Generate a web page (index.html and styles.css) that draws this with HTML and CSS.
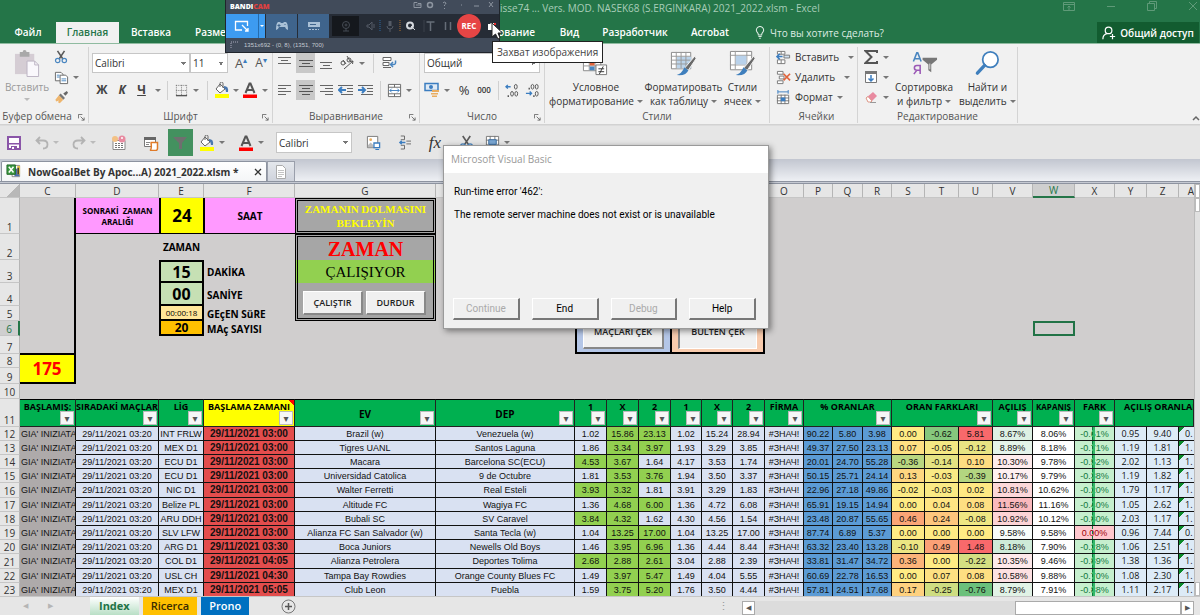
FILE: index.html
```html
<!DOCTYPE html>
<html lang="ru">
<head>
<meta charset="utf-8">
<title>NowGoalBet - Excel</title>
<link rel="stylesheet" href="styles.css">
</head>
<body>
<svg class="defs" aria-hidden="true">
  <symbol id="cut" viewBox="0 0 16 16"><path d="M4 1l6 9M12 1L6 10" stroke="#5a5a5a" stroke-width="1.8" fill="none"/><circle cx="4.2" cy="12" r="2.5" fill="none" stroke="#4a86c0" stroke-width="1.4"/><circle cx="11.8" cy="12" r="2.5" fill="none" stroke="#4a86c0" stroke-width="1.4"/></symbol>
  <symbol id="copy" viewBox="0 0 16 16"><path d="M1.500 2.500h6l2 2v7h-8z" fill="#fff" stroke="#666"/><path d="M6.500 5.500h6l2 2v7h-8z" fill="#fff" stroke="#666"/><path d="M3 5.500h3M3 7.500h3M8 9.500h5M8 11.500h5" stroke="#4a86c0"/></symbol>
  <symbol id="brush" viewBox="0 0 16 16"><path d="M10 4l4-3 1.500 2-3 3.500z" fill="#666"/><path d="M7 4l5 5-2 2-5-5z" fill="#777"/><path d="M5 6l5 5-4 4-2-1 1-2-3 1-1-2z" fill="#eeb56d"/></symbol>
  <symbol id="paste" viewBox="0 0 28 28"><path d="M1 4h20v21H1z" fill="#d5cdd4"/><path d="M6 2h3a2 2 0 0 1 4 0h3v5H6z" fill="#a9a9a9"/><path d="M13.500 11.500h8l4 4v12h-12z" fill="#faf8fc" stroke="#bbb3c3"/><path d="M21.500 11.500v4h4" fill="none" stroke="#bbb3c3"/></symbol>
  <symbol id="bucket" viewBox="0 0 16 16"><path d="M6 2l5 5-5 4-4-4z" fill="#fff" stroke="#666"/><path d="M6 5V1.500a1.500 1.500 0 0 1 3 0V6" fill="none" stroke="#666"/><path d="M10 4q5 0 4 6l-2 0q0-3-2-4z" fill="#4a78b0"/><path d="M1 12h14v4H1z" fill="#ff0"/></symbol>
  <symbol id="fontcolor" viewBox="0 0 16 16"><path d="M3.500 11L7.500 1.500h1L12.500 11M5 8h6" stroke="#555" stroke-width="2" fill="none"/><path d="M1 12.500h14V16H1z" fill="#f00"/></symbol>
  <symbol id="borders" viewBox="0 0 14 14"><path d="M1 1.500h12M1 7h12M1.500 1v12M7 1v12M12.500 1v12" stroke="#777" stroke-dasharray="1 1" fill="none"/><path d="M1 12.500h12" stroke="#555" stroke-width="1.500"/></symbol>
  <symbol id="al-l" viewBox="0 0 14 14"><path d="M0 2.500h13M0 5.500h8M0 8.500h13M0 11.500h8" stroke="#666"/></symbol>
  <symbol id="al-c" viewBox="0 0 14 14"><path d="M0 2.500h14M3 5.500h8M0 8.500h14M3 11.500h8" stroke="#555"/></symbol>
  <symbol id="al-r" viewBox="0 0 14 14"><path d="M1 2.500h13M6 5.500h8M1 8.500h13M6 11.500h8" stroke="#666"/></symbol>
  <symbol id="v-t" viewBox="0 0 14 14"><path d="M0 1.500h13M3 4.500h7M0 7.500h13" stroke="#666"/></symbol>
  <symbol id="v-m" viewBox="0 0 14 14"><path d="M0 4.500h14M3 7.500h8M0 10.500h14" stroke="#555"/></symbol>
  <symbol id="v-b" viewBox="0 0 14 14"><path d="M1 6.500h12M4 9.500h7M1 12.500h12" stroke="#666"/></symbol>
  <symbol id="orient" viewBox="0 0 16 16"><g fill="none" stroke="#555"><circle cx="4" cy="8" r="2"/><path d="M4 5l3 4M8 1l3 5"/><circle cx="10" cy="5" r="2"/><path d="M5 14L14 6M14 6l-3 .500M14 6l-.500 3"/></g></symbol>
  <symbol id="wrap" viewBox="0 0 16 16"><path d="M2 2.500h8v3H2zM2 7.500h6v3H2zM2 12.500h8" fill="#fff" stroke="#666"/><path d="M10 9.500h3q2 0 1.500-4M12 7l-2.500 2.500L12 12" fill="none" stroke="#4a86c0" stroke-width="1.500"/></symbol>
  <symbol id="ind-l" viewBox="0 0 16 14"><path d="M0 2.500h15M9 5.500h6M9 8.500h6M3 11.500h12" stroke="#666"/><path d="M8 7H1M4 4L1 7l3 3" stroke="#3b7dc0" stroke-width="2" fill="none"/></symbol>
  <symbol id="ind-r" viewBox="0 0 16 14"><path d="M0 2.500h15M9 5.500h6M9 8.500h6M3 11.500h12" stroke="#666"/><path d="M0 7h7M4 4l3 3-3 3" stroke="#3b7dc0" stroke-width="2" fill="none"/></symbol>
  <symbol id="merge" viewBox="0 0 16 16"><path d="M1.500 1.500h13v13h-13zM1.500 4.500h13M1.500 11.500h13M8 1.500v3M8 11.500v3" fill="#fff" stroke="#666"/><path d="M3 8h10M5 6L3 8l2 2M11 6l2 2-2 2" stroke="#3b7dc0" fill="none"/></symbol>
  <symbol id="money" viewBox="0 0 16 16"><path d="M1 1.500h13v7H1z" fill="#dfeaf5" stroke="#3b7dc0" stroke-width="1.500"/><circle cx="7" cy="5" r="2" fill="#3b7dc0"/><path d="M8 8h7v2H8zM7 11h7v1.500H7zM8 13.500h5V15H8z" fill="#e9ad60"/></symbol>
  <symbol id="dec1" viewBox="0 0 16 16"><path d="M6 4H1M3 2L1 4l2 2" stroke="#3b7dc0" fill="none" stroke-width="1.400"/><ellipse cx="11.500" cy="4" rx="1.500" ry="2.500" fill="none" stroke="#555"/><ellipse cx="7.500" cy="11.500" rx="1.500" ry="2.500" fill="none" stroke="#555"/><ellipse cx="12" cy="11.500" rx="1.500" ry="2.500" fill="none" stroke="#555"/><path d="M3.500 13v2" stroke="#555" stroke-width="1.500"/></symbol>
  <symbol id="dec2" viewBox="0 0 16 16"><path d="M1 11h6M5 9l2 2-2 2" stroke="#3b7dc0" fill="none" stroke-width="1.400"/><ellipse cx="8" cy="4" rx="1.500" ry="2.500" fill="none" stroke="#555"/><ellipse cx="12.500" cy="4" rx="1.500" ry="2.500" fill="none" stroke="#555"/><ellipse cx="12.500" cy="11.500" rx="1.500" ry="2.500" fill="none" stroke="#555"/><path d="M4.500 5v2M9.500 13v2" stroke="#555" stroke-width="1.500"/></symbol>
  <symbol id="cond" viewBox="0 0 28 28"><path d="M1.500 1.500h18v20h-18z" fill="#fff" stroke="#888"/><path d="M7.500 1v20M13.500 1v20M1 6.500h18M1 11.500h18M1 16.500h18" stroke="#999"/><path d="M8 2h8v4H8zM8 12h5v4H8z" fill="#e0643c"/><path d="M8 7h5v4H8zM8 17h5v4H8z" fill="#4a86c0"/><path d="M14.500 15.500h11v10h-11z" fill="#fff" stroke="#777"/><path d="M17 19.500h6M17 22.500h6M22 17l-4 8" stroke="#333"/></symbol>
  <symbol id="fmt" viewBox="0 0 28 28"><path d="M1.500 2.500h20v17h-20z" fill="#fff" stroke="#888"/><path d="M7 7h15v12H7z" fill="#bcd4ea"/><path d="M6.500 2v17M11.500 2v17M16.500 2v17M1 6.500h20M1 10.500h20M1 14.500h20" stroke="#999"/><path d="M26 6l1 3-8 12-4-2z" fill="#6a6a6a" stroke="#f1f1f1"/><path d="M15 18l4 3q-2 6-12 5 5-1 8-8z" fill="#3f7fbd"/></symbol>
  <symbol id="styles" viewBox="0 0 28 28"><path d="M1.500 1.500h22v19h-22z" fill="#fff" stroke="#888"/><path d="M6.500 1v19M18.500 1v19M1 5.500h22M1 15.500h22" stroke="#999"/><path d="M7 6h11v9H7z" fill="#b9d2eb"/><path d="M26 6l1 3-8 12-4-2z" fill="#6a6a6a" stroke="#f1f1f1"/><path d="M15 18l4 3q-2 6-12 5 5-1 8-8z" fill="#3f7fbd"/></symbol>
  <symbol id="c-ins" viewBox="0 0 16 16"><path d="M1.500 1.500h8v3h-8zM1.500 10.500h8v4h-8zM5.500 1.500v3M5.500 10.500v4" fill="#fff" stroke="#777"/><path d="M8.500 5.500h6v3h-6z" fill="#cfe0f0" stroke="#777"/><path d="M7 7H1M4 4L1 7l3 3" stroke="#3b7dc0" stroke-width="1.600" fill="none"/></symbol>
  <symbol id="c-del" viewBox="0 0 16 16"><path d="M1.500 1.500h6v3h-6zM3.500 6.500h5v3h-5zM1.500 11.500h6v3h-6z" fill="#fff" stroke="#777"/><path d="M8 4l7 7M15 4l-7 7" stroke="#e0643c" stroke-width="1.800"/></symbol>
  <symbol id="c-fmt" viewBox="0 0 16 16"><path d="M2 2h11M2 0v4M13 0v4" stroke="#3b7dc0"/><path d="M1.500 5.500h12v9h-12zM1 8.500h13M1 11.500h13M5.500 5v10M9.500 5v10" fill="#fff" stroke="#777"/><path d="M5 8h5v4H5z" fill="#3b7dc0"/></symbol>
  <symbol id="sigma" viewBox="0 0 14 14"><path d="M13 3V1H1.500l6 6-6 6H13v-2" fill="none" stroke="#555" stroke-width="2"/></symbol>
  <symbol id="filld" viewBox="0 0 14 14"><path d="M1.500 1.500h11v11h-11z" fill="#fff" stroke="#777"/><path d="M1 1h12v3H1z" fill="#777"/><path d="M7 5v6M4.500 8.500L7 11l2.500-2.500" fill="none" stroke="#3b7dc0" stroke-width="1.500"/></symbol>
  <symbol id="erase" viewBox="0 0 14 14"><path d="M2 8l7-6 4 4-6 6H4z" fill="#e88aa0"/><path d="M2 8l2-1.500L8 11l-1 1H4z" fill="#fff" stroke="#d98"/><path d="M6 12.500h6" stroke="#999"/></symbol>
  <symbol id="sort" viewBox="0 0 28 28"><path d="M2.500 12L6 3h1l3.500 9M4 9h5" fill="none" stroke="#4a86c0" stroke-width="1.600"/><path d="M9.500 25V16H6q-2.500 0-2.500 2.500T6 21h3.500M6 21l-3 4" fill="none" stroke="#9b59b6" stroke-width="1.600"/><path d="M12 8h15v2l-6 5v8l-3-2v-6l-6-5z" fill="#777"/><path d="M19.500 14v6" stroke="#ddd"/></symbol>
  <symbol id="find" viewBox="0 0 28 28"><circle cx="17" cy="10" r="8" fill="#fff" stroke="#3f7fbd" stroke-width="1.800"/><path d="M11 16L3.500 24" stroke="#3f7fbd" stroke-width="3.500" stroke-linecap="round"/></symbol>
  <symbol id="launch" viewBox="0 0 8 8"><path d="M.500 5V.500H5M3 3l4 4M7 4v3H4" fill="none" stroke="#666"/></symbol>
  <symbol id="save" viewBox="0 0 14 14"><path d="M1 1h12v12H1z" fill="#fff" stroke="#8a55a8" stroke-width="2"/><path d="M2 7h10v1.500H2zM4 10h6v3H4z" fill="#8a55a8"/><path d="M5 11h2v2H5z" fill="#fff"/></symbol>
  <symbol id="undo" viewBox="0 0 14 14"><path d="M5 1L1.500 4.500 5 8M2 4.500h6q4.500 0 4.500 4T8 12.500" fill="none" stroke="#b3b3b3" stroke-width="1.800"/></symbol>
  <symbol id="redo" viewBox="0 0 14 14"><path d="M9 1l3.500 3.500L9 8M12 4.500H6q-4.500 0-4.500 4T6 12.500" fill="none" stroke="#b3b3b3" stroke-width="1.800"/></symbol>
  <symbol id="cal" viewBox="0 0 16 16"><path d="M2 5.500h12v9H2z" fill="#fff" stroke="#888"/><path d="M4 8.500h8M4 10.500h8M4 12.500h8" stroke="#777" stroke-dasharray="2 1"/><circle cx="4" cy="4" r="3" fill="#f3c184"/><circle cx="11" cy="4" r="3.500" fill="#e88aa0"/><circle cx="11" cy="3" r="1" fill="#fff"/></symbol>
  <symbol id="note" viewBox="0 0 16 16"><path d="M1.500 2.500h11v9h-11z" fill="#fff" stroke="#777"/><path d="M1 2h12v3H1z" fill="#666"/><path d="M3 7.500h4M3 9.500h3" stroke="#888"/><path d="M7.500 7.500h7v6q0 2-2 2H7q2-1 1-8z" fill="#fff" stroke="#e07b28" stroke-width="1.500"/></symbol>
  <symbol id="funnel" viewBox="0 0 14 14"><path d="M0 1h14L9 7v6H6V7z" fill="#6f6f6f"/></symbol>
  <symbol id="img" viewBox="0 0 16 16"><path d="M1.500 1.500h11v12h-11z" fill="#fff" stroke="#777"/><circle cx="5" cy="5" r="1.500" fill="#e9ad60"/><path d="M2 11l3-3 3 3v2H2z" fill="#bbb"/><path d="M8.500 8.500h6v5h-6zM10 15.500h4" fill="#fff" stroke="#3b7dc0" stroke-width="1.400"/></symbol>
  <symbol id="split" viewBox="0 0 14 16"><path d="M3 1h4v4H3M3 11h4v4H3M9 6.500h5M9 9.500h5" fill="none" stroke="#666"/><path d="M8 8H2M4 6L2 8l2 2" fill="none" stroke="#3b7dc0" stroke-width="1.500"/></symbol>
  <symbol id="tabsel" viewBox="0 0 16 16"><path d="M1.500 1.500h13v13h-13zM1 5.500h14M1 10.500h14M5.500 1v14M10.500 1v14" fill="#fff" stroke="#777"/><path d="M4 5h8v5H4z" fill="#7aa7d3" stroke="#3b6da0"/></symbol>
  <symbol id="bulb" viewBox="0 0 12 16"><path d="M4 11q0-2-1.500-3.500a4.300 4.300 0 1 1 7 0Q8 9 8 11zM4 13h4M5 15h2" fill="none" stroke="#dcebe2" stroke-width="1.300"/></symbol>
  <symbol id="share" viewBox="0 0 16 16"><circle cx="7.500" cy="5" r="3.800" fill="none" stroke="#fff" stroke-width="1.400"/><path d="M1 15q0-5 5-6.500M9 12h6M12 9v6" fill="none" stroke="#fff" stroke-width="1.400"/></symbol>
  <symbol id="xl" viewBox="0 0 16 16"><path d="M6.500 1.500h8v12h-8z" fill="#fff" stroke="#888"/><path d="M9 5h5v8H9z" fill="#4a6fae"/><path d="M12 2h3v9h-3z" fill="#e3c14c"/><path d="M13 4v7" stroke="#333" stroke-width="1.500"/><path d="M1 1h9v10H1z" fill="#3c9a41" stroke="#22682a"/><path d="M3 3l5 6M8 3L3 9" stroke="#fff" stroke-width="1.600"/></symbol>
  <symbol id="page" viewBox="0 0 12 14"><path d="M1.500.500h6l3 3v10h-9z" fill="#fff" stroke="#aaa"/><path d="M3 5.500h6M3 7.500h6M3 9.500h6M3 11.500h4" stroke="#c3c3c3"/></symbol>
</svg>

<div class="app">
  <header class="top">
    <div class="titlebar">
      <span class="title">isse74 ... Vers. MOD. NASEK68 (S.ERGINKARA) 2021_2022.xlsm - Excel</span>
      <div class="winbtns">
        <button aria-label="Параметры ленты"><svg width="12" height="10"><path d="M.500 1.500h11v8H.500zM.500 3.500h11M6 9V5M4.500 6.500L6 5l1.500 1.500" fill="none" stroke="#5f9a78"/></svg></button>
        <button aria-label="Свернуть"><svg width="10" height="10"><path d="M1 5.500h8" stroke="#5f9a78"/></svg></button>
        <button aria-label="Восстановить"><svg width="10" height="10"><path d="M.500 2.500h7v7h-7zM2.500 2.500v-2h7v7h-2" fill="none" stroke="#5f9a78"/></svg></button>
        <button aria-label="Закрыть"><svg width="10" height="10"><path d="M1 1l8 8M9 1L1 9" stroke="#5f9a78"/></svg></button>
      </div>
    </div>
    <nav class="tabs">
      <a href="#">Файл</a><a href="#" class="on">Главная</a><a href="#">Вставка</a><a href="#" class="left">Разметка</a><a href="#" class="right">Рецензирование</a><a href="#">Вид</a><a href="#">Разработчик</a><a href="#">Acrobat</a>
      <button class="tell"><svg width="10" height="13"><use href="#bulb"/></svg>Что вы хотите сделать?</button>
      <button class="share"><svg width="14" height="14"><use href="#share"/></svg>Общий доступ</button>
    </nav>
  </header>

  <section class="ribbon">
    <div class="group g-clip">
      <div class="body">
        <button class="big off"><svg width="27" height="27"><use href="#paste"/></svg>Вставить<i class="caret"></i></button>
        <div class="stack">
          <button class="ib" aria-label="Вырезать"><svg width="14" height="14"><use href="#cut"/></svg></button>
          <button class="ib" aria-label="Копировать"><svg width="15" height="15"><use href="#copy"/></svg><i class="caret"></i></button>
          <button class="ib" aria-label="Формат по образцу"><svg width="15" height="14"><use href="#brush"/></svg></button>
        </div>
      </div>
      <div class="label">Буфер обмена<svg width="7" height="7"><use href="#launch"/></svg></div>
    </div>
    <div class="group g-font">
      <div class="body rows">
        <div class="r f1">
          <select aria-label="Шрифт"><option>Calibri</option></select><select aria-label="Размер"><option>11</option></select>
          <button class="ib grow">A<sup>▴</sup></button><button class="ib grow less">A<sup>▾</sup></button>
        </div>
        <div class="r f2">
          <button class="ib b">Ж</button><button class="ib b i">К</button><button class="ib b u">Ч</button><i class="caret"></i><i class="sep"></i>
          <button class="ib" aria-label="Границы"><svg width="13" height="13"><use href="#borders"/></svg></button><i class="caret"></i><i class="sep"></i>
          <button class="ib" aria-label="Заливка"><svg width="16" height="16"><use href="#bucket"/></svg></button><i class="caret"></i>
          <button class="ib" aria-label="Цвет текста"><svg width="16" height="16"><use href="#fontcolor"/></svg></button><i class="caret"></i>
        </div>
      </div>
      <div class="label">Шрифт<svg width="7" height="7"><use href="#launch"/></svg></div>
    </div>
    <div class="group g-align">
      <div class="body rows">
        <div class="r a1">
          <button class="ib" aria-label="По верхнему краю"><svg width="14" height="14"><use href="#v-t"/></svg></button><button class="ib hl" aria-label="По середине"><svg width="14" height="14"><use href="#v-m"/></svg></button><button class="ib" aria-label="По нижнему краю"><svg width="14" height="14"><use href="#v-b"/></svg></button>
          <button class="ib" aria-label="Ориентация"><svg width="16" height="16"><use href="#orient"/></svg><i class="caret"></i></button><i class="sep"></i>
          <button class="ib" aria-label="Перенести текст"><svg width="16" height="16"><use href="#wrap"/></svg></button>
        </div>
        <div class="r a2">
          <button class="ib" aria-label="По левому краю"><svg width="14" height="14"><use href="#al-l"/></svg></button><button class="ib hl" aria-label="По центру"><svg width="14" height="14"><use href="#al-c"/></svg></button><button class="ib" aria-label="По правому краю"><svg width="14" height="14"><use href="#al-r"/></svg></button>
          <button class="ib" aria-label="Уменьшить отступ"><svg width="16" height="14"><use href="#ind-l"/></svg></button><button class="ib" aria-label="Увеличить отступ"><svg width="16" height="14"><use href="#ind-r"/></svg></button><i class="sep"></i>
          <button class="ib" aria-label="Объединить"><svg width="15" height="15"><use href="#merge"/></svg><i class="caret"></i></button>
        </div>
      </div>
      <div class="label">Выравнивание<svg width="7" height="7"><use href="#launch"/></svg></div>
    </div>
    <div class="group g-num">
      <div class="body rows">
        <div class="r n1"><select aria-label="Числовой формат"><option>Общий</option></select></div>
        <div class="r n2">
          <button class="ib" aria-label="Денежный формат"><svg width="16" height="16"><use href="#money"/></svg><i class="caret"></i></button>
          <button class="ib pct">%</button><button class="ib zeros">000</button><i class="sep"></i>
          <button class="ib" aria-label="Увеличить разрядность"><svg width="15" height="15"><use href="#dec1"/></svg></button><button class="ib" aria-label="Уменьшить разрядность"><svg width="15" height="15"><use href="#dec2"/></svg></button>
        </div>
      </div>
      <div class="label">Число<svg width="7" height="7"><use href="#launch"/></svg></div>
    </div>
    <div class="group g-styles">
      <div class="body">
        <button class="big"><svg width="27" height="27"><use href="#cond"/></svg>Условное<span>форматирование<i class="caret"></i></span></button>
        <button class="big"><svg width="27" height="27"><use href="#fmt"/></svg>Форматировать<span>как таблицу<i class="caret"></i></span></button>
        <button class="big"><svg width="27" height="27"><use href="#styles"/></svg>Стили<span>ячеек<i class="caret"></i></span></button>
      </div>
      <div class="label">Стили</div>
    </div>
    <div class="group g-cells">
      <div class="body stack">
        <button class="ib"><svg width="15" height="15"><use href="#c-ins"/></svg>Вставить<i class="caret far"></i></button>
        <button class="ib"><svg width="15" height="15"><use href="#c-del"/></svg>Удалить<i class="caret far"></i></button>
        <button class="ib"><svg width="15" height="15"><use href="#c-fmt"/></svg>Формат<i class="caret"></i></button>
      </div>
      <div class="label">Ячейки</div>
    </div>
    <div class="group g-edit">
      <div class="body">
        <div class="stack">
          <button class="ib" aria-label="Сумма"><svg width="14" height="14"><use href="#sigma"/></svg><i class="caret"></i></button>
          <button class="ib" aria-label="Заполнить"><svg width="14" height="14"><use href="#filld"/></svg><i class="caret"></i></button>
          <button class="ib" aria-label="Очистить"><svg width="14" height="14"><use href="#erase"/></svg><i class="caret"></i></button>
        </div>
        <button class="big"><svg width="27" height="27"><use href="#sort"/></svg>Сортировка<span>и фильтр<i class="caret"></i></span></button>
        <button class="big"><svg width="27" height="27"><use href="#find"/></svg>Найти и<span>выделить<i class="caret"></i></span></button>
      </div>
      <div class="label">Редактирование</div>
    </div>
    <button class="collapse" aria-label="Свернуть ленту"><svg width="8" height="6"><path d="M1 5l3-3 3 3" fill="none" stroke="#666" stroke-width="1.500"/></svg></button>
  </section>

  <section class="qat">
    <button class="ib" aria-label="Сохранить"><svg width="14" height="14"><use href="#save"/></svg></button>
    <button class="ib dim" aria-label="Отменить"><svg width="14" height="14"><use href="#undo"/></svg><i class="caret"></i></button>
    <button class="ib dim" aria-label="Вернуть"><svg width="14" height="14"><use href="#redo"/></svg><i class="caret"></i></button>
    <button class="ib" aria-label="Календарь"><svg width="16" height="16"><use href="#cal"/></svg></button>
    <button class="ib" aria-label="Макросы"><svg width="16" height="16"><use href="#note"/></svg></button>
    <button class="ib filt" aria-label="Фильтр"><svg width="14" height="14"><use href="#funnel"/></svg></button>
    <button class="ib" aria-label="Заливка"><svg width="16" height="16"><use href="#bucket"/></svg><i class="caret"></i></button>
    <button class="ib" aria-label="Цвет"><svg width="16" height="16"><use href="#fontcolor"/></svg><i class="caret"></i></button>
    <select aria-label="Шрифт панели"><option>Calibri</option></select>
    <button class="ib" aria-label="Рисунок"><svg width="15" height="15"><use href="#img"/></svg></button>
    <button class="ib" aria-label="Разделить"><svg width="13" height="15"><use href="#split"/></svg></button>
    <button class="ib fx">fx</button>
    <button class="ib" aria-label="Вырезать"><svg width="15" height="15"><use href="#cut"/></svg></button>
    <button class="ib" aria-label="Таблица"><svg width="15" height="15"><use href="#tabsel"/></svg><i class="caret"></i></button>
  </section>

  <section class="docs">
    <div class="doc"><svg width="15" height="15"><use href="#xl"/></svg><span>NowGoalBet By Apoc...A) 2021_2022.xlsm *</span><button aria-label="Закрыть книгу"><svg width="8" height="8"><path d="M1 1l6 6M7 1L1 7" stroke="#333" stroke-width="1.300"/></svg></button></div>
    <button class="newdoc" aria-label="Новая книга"><svg width="12" height="14"><use href="#page"/></svg></button>
  </section>

  <main class="sheet">
    <div class="view">
    <table>
      <colgroup><col class="w20"><col class="w56"><col class="w83"><col class="w45"><col class="w91"><col class="w141"><col class="w139"><col class="w32"><col class="w32"><col class="w32"><col class="w31"><col class="w31"><col class="w32"><col class="w39"><col class="w29"><col class="w30"><col class="w29"><col class="w33"><col class="w34"><col class="w34"><col class="w40"><col class="w42"><col class="w40"><col class="w32"><col class="w32"><col class="w15"></colgroup>
      <thead><tr class="cols"><th class="corner"></th><th>C</th><th>D</th><th>E</th><th>F</th><th>G</th><th></th><th></th><th></th><th></th><th></th><th></th><th></th><th>O</th><th>P</th><th>Q</th><th>R</th><th>S</th><th>T</th><th>U</th><th>V</th><th class="cur">W</th><th>X</th><th>Y</th><th>Z</th><th class="cut">A</th></tr></thead>
      <tbody class="form">
        <tr class="h36"><th>1</th><td rowspan="7" class="colc"></td><td class="pink small">SONRAKİ&nbsp; ZAMAN ARALIĞI</td><td class="yellow n24">24</td><td class="pink saat">SAAT</td><td class="frame wait">ZAMANIN DOLMASINI BEKLEYİN</td><td rowspan="7"></td><td colspan="3" rowspan="7" class="act blue"><button>MAÇLARI ÇEK</button></td><td colspan="3" rowspan="7" class="act peach"><button>BÜLTEN ÇEK</button></td><td colspan="13"></td></tr>
        <tr class="h26"><th>2</th><td></td><td class="cap">ZAMAN</td><td></td><td class="frame ft zaman">ZAMAN</td><td colspan="13"></td></tr>
        <tr class="h23"><th>3</th><td></td><td class="box mint first">15</td><td class="name">DAKİKA</td><td class="frame fm run">ÇALIŞIYOR</td><td colspan="13"></td></tr>
        <tr class="h23"><th>4</th><td></td><td class="box mint">00</td><td class="name">SANİYE</td><td rowspan="2" class="frame fb"><div class="pair"><button>ÇALIŞTIR</button><button>DURDUR</button></div></td><td colspan="13"></td></tr>
        <tr class="h15"><th>5</th><td></td><td class="box sand">00:00:18</td><td class="name">GEçEN SüRE</td><td colspan="13"></td></tr>
        <tr class="h15"><th class="cur">6</th><td></td><td class="box amber">20</td><td class="name">MAç SAYISI</td><td></td><td colspan="8"></td><td class="sel"></td><td colspan="4"></td></tr>
        <tr class="h18"><th>7</th><td colspan="4"></td><td colspan="13"></td></tr>
        <tr class="h14"><th>8</th><td rowspan="2" class="yellow n175">175</td><td colspan="24"></td></tr>
        <tr class="h16"><th>9</th><td colspan="24"></td></tr>
        <tr class="h15"><th>10</th><td colspan="25"></td></tr>
        <tr class="heads"><th>11</th>
          <td>BAŞLAMIŞ:<button>▾</button></td><td>SIRADAKİ MAÇLAR<button>▾</button></td><td>LİG<button>▾</button></td><td class="yel">BAŞLAMA ZAMANI<button>▾</button></td><td class="mid">EV<button>▾</button></td><td class="mid">DEP<button>▾</button></td><td>1<button>▾</button></td><td>X<button>▾</button></td><td>2<button>▾</button></td><td>1<button>▾</button></td><td>X<button>▾</button></td><td>2<button>▾</button></td><td>FİRMA<button>▾</button></td><td colspan="3">% ORANLAR<button>▾</button></td><td colspan="3">ORAN FARKLARI<button>▾</button></td><td>AÇILIŞ<button>▾</button></td><td class="tight">KAPANIŞ<button>▾</button></td><td>FARK<button>▾</button></td><td colspan="3" class="open">AÇILIŞ ORANLARI</td></tr>
      </tbody>
      <tbody id="data" class="data"></tbody>
    </table>
    </div>
    <div class="vscroll"><i></i><i></i><i class="end"></i></div>
  </main>

  <footer class="bottom">
    <button class="nav" aria-label="Назад">◀</button><button class="nav" aria-label="Вперёд">▶</button>
    <button class="st index">Index</button><button class="st ric">Ricerca</button><button class="st pro">Prono</button>
    <button class="plus" aria-label="Новый лист"><svg width="15" height="15"><circle cx="7.500" cy="7.500" r="6.500" fill="none" stroke="#777"/><path d="M4 7.500h7M7.500 4v7" stroke="#555" stroke-width="1.500"/></svg></button>
    <div class="hs"><span class="dots">⋮</span><button aria-label="Влево">◀</button><div class="track"><i></i></div><button aria-label="Вправо">▶</button></div>
  </footer>

  <div class="bandicam">
    <div class="bt"><b>BANDI<em>CAM</em></b><span class="bw"><svg width="84" height="10" fill="none" stroke="#8d95a0"><path d="M1 2.500h3l1 1h3v4H1zM3 5h5"/><circle cx="17" cy="5" r="2.500" stroke-width="1.500"/><path d="M30 3q1-2 3 0 0 1-1.500 2v1M31.500 8v1M48 5h1M61 6h5M76 2l4 5M80 2l-4 5"/></svg></span></div>
    <div class="bm">
      <button class="m1" aria-label="Область экрана"><svg width="16" height="12" fill="none" stroke="#fff"><path d="M8 10H1.500V1.500h12V6M8 5l6 6M14 8v3h-3" stroke-width="1.300"/></svg></button><button class="m2" aria-label="Режим"><i class="caret"></i></button>
      <button class="m3" aria-label="Игра"><svg width="14" height="10"><path d="M3 1h2l1 1h2l1-1h2q2 1 2 8-2 0-3-3H4Q3 9 1 9 1 2 3 1z" fill="#a9c0d6"/><path d="M4 3v3M2.500 4.500h3M10 3v1" stroke="#3f648c"/></svg></button>
      <button class="m3" aria-label="Устройство"><svg width="14" height="10"><path d="M1 1h12v5H1z" fill="#a9c0d6"/><path d="M2 8.500h10M3 3h5" stroke="#a9c0d6" stroke-dasharray="2 1"/><path d="M3 3.500h6" stroke="#3f648c"/></svg></button>
      <span class="cam"><svg width="12" height="12" fill="none" stroke="#454b54"><circle cx="6" cy="5" r="3.500"/><circle cx="6" cy="5" r="1"/><path d="M3 11h6M6 8v3"/></svg></span>
      <svg class="icons" width="90" height="16" fill="none"><path d="M1 7h2l3-3v8L3 9H1zM8 6v4" stroke="#545b66"/><path d="M14 2v12" stroke="#2b67a0" stroke-dasharray="1 1"/><path d="M24 3v5" stroke="#545b66" stroke-width="3"/><path d="M21 8q0 3 3 3t3-3M24 11v3" stroke="#545b66"/><path d="M34 2v12" stroke="#b0712c" stroke-dasharray="1 1"/><circle cx="44" cy="7.500" r="3" stroke="#d5d9de" stroke-width="2"/><path d="M45 8l4 4" stroke="#d5d9de"/><path d="M58 2v12" stroke="#3a404a"/><path d="M60.500 4h8M64.500 4v9" stroke="#666d78" stroke-width="1.500"/><path d="M79.500 4v8M84.500 4v8" stroke="#666d78" stroke-width="1.500"/></svg>
      <button class="rec">REC</button>
      <span class="shot"><svg width="9" height="9"><path d="M1 2h2l1-1h3v7H1z" fill="#fff"/><path d="M7 1h2v2H7z" fill="#e33"/></svg></span>
    </div>
    <div class="bs"><svg width="8" height="8"><path d="M1 7V1h7" fill="none" stroke="#aab" stroke-dasharray="1 1"/></svg>1351x692 - (0, 8), (1351, 700)</div>
  </div>
  <div class="tip">Захват изображения</div>
  <svg class="pointer" width="12" height="18"><path d="M1 1v14l3.500-3 2.500 5 2-1-2-5h4.500z" fill="#fff" stroke="#222"/></svg>

  <div class="dialog" role="dialog" aria-labelledby="dlg">
    <h2 id="dlg">Microsoft Visual Basic</h2>
    <div class="msg"><p>Run-time error '462':</p><p>The remote server machine does not exist or is unavailable</p></div>
    <div class="acts"><button disabled>Continue</button><button>End</button><button disabled>Debug</button><button>Help</button></div>
  </div>
</div>
<script src="app.js"></script>
</body>
</html>
```
FILE: styles.css
```css
* { box-sizing: border-box; }
body { margin: 0; font: 10px/14px "Open Sans", "Noto Sans", sans-serif; color: #333; }
button, select { font: inherit; color: inherit; margin: 0; padding: 0; border: 0; background: none; border-radius: 0; }
.defs { position: absolute; width: 0; height: 0; }
svg { display: block; flex: none; }
.app { position: relative; height: 100vh; display: flex; flex-direction: column; overflow: hidden; background: #e6e6e6; }
.caret { flex: none; width: 0; height: 0; border: 3px solid transparent; border-top-color: #777; border-bottom: 0; }
.sep { width: 1px; height: 19px; background: #d0d0d0; justify-self: center; }
.ib { display: flex; align-items: center; justify-content: center; gap: 4px; }
select { appearance: none; height: 20px; border: 1px solid #c6c6c6; background: #fff; padding: 0 2px; background-image: linear-gradient(45deg, transparent 50%, #777 50%), linear-gradient(-45deg, transparent 50%, #777 50%); background-size: 3px 3px; background-position: calc(100% - 6px) 8px, calc(100% - 3px) 8px; background-repeat: no-repeat; }

.top { background: #247548; flex: none; }
.titlebar { height: 22px; padding: 0 2px 0 500px; display: flex; align-items: flex-start; justify-content: space-between; color: #a8cdb8; white-space: nowrap; line-height: 16px; }
.winbtns { display: flex; gap: 31px; padding-top: 1px; }
.tabs { height: 22px; display: grid; grid-template-columns: 56px 63px 64px 77px 287px 45px 86px 64px 1fr 103px; border-bottom: 1px solid #8fbba0; color: #fff; }
.tabs a { color: #fff; text-decoration: none; text-align: center; line-height: 21px; white-space: nowrap; font-weight: 600; }
.tabs .on { background: #f1f1f1; color: #247548; }
.tabs .left { text-align: left; padding-left: 12px; }
.tabs .right { text-align: right; padding-right: 12px; }
.tell { display: flex; align-items: center; gap: 5px; padding-left: 13px; color: #dcebe2; }
.share { background: #125c30; display: flex; align-items: center; justify-content: center; gap: 4px; margin-right: 1px; white-space: nowrap; font-weight: 600; }

.ribbon { flex: none; display: flex; background: #f1f1f1; height: 81px; border-bottom: 1px solid #d2d2d2; padding: 3px 0 0; position: relative; }
.group { border-right: 1px solid #d4d4d4; display: flex; flex-direction: column; flex: none; margin-bottom: 1px; }
.body { flex: 1; display: flex; }
.rows { flex-direction: column; gap: 7px; padding-top: 6px; }
.r { display: grid; align-items: center; height: 20px; }
.label { position: relative; text-align: center; color: #555; height: 13px; line-height: 13px; }
.label svg { position: absolute; right: 3px; top: 4px; }
.big { display: flex; flex-direction: column; align-items: center; padding-top: 3px; white-space: nowrap; line-height: 14px; }
.big svg { margin-bottom: 3px; }
.big span { display: flex; align-items: center; gap: 3px; }
.big.off { color: #999; }
.big.off .caret, .dim .caret { border-top-color: #bbb; }
.big.off .caret { margin-top: 4px; }
.stack { display: flex; flex-direction: column; justify-content: flex-start; align-items: flex-start; }
.stack .ib { height: 20px; }
.g-clip { width: 89px; } .g-clip .big { width: 54px; }
.g-clip .label { padding-right: 14px; }
.g-font { width: 184px; }
.g-align { width: 147px; }
.g-num { width: 125px; }
.g-styles { width: 225px; }
.g-cells { width: 88px; padding-left: 6px; }
.g-edit { width: 160px; }
.f1 { grid-template-columns: 98px 38px 20px 20px; padding-left: 3px; }
.grow { font-size: 13px; color: #555; gap: 0; padding-left: 6px; }
.grow.less { font-size: 12px; }
.grow sup { font-size: 8px; line-height: 8px; color: #3b7dc0; align-self: flex-start; }
.f2 { grid-template-columns: 26px 14px 25px 8px 10px 18px 12px 10px 20px 8px 20px 9px; justify-content: start; }
.f2 .caret { justify-self: center; }
.b { font-weight: 700; font-size: 12px; color: #444; } .i { font-style: italic; } .u { text-decoration: underline; }
.a1 { grid-template-columns: 23px 19px 21px 32px 10px 22px; justify-content: start; }
.a2 { grid-template-columns: 23px 19px 21px 20px 20px 8px 30px; justify-content: start; }
.hl { background: #c8c8c8; height: 20px; }
.n1 { padding: 0 4px; }
.n2 { grid-template-columns: 34px 20px 20px 8px 20px 20px; }
.pct { font-size: 13px; } .zeros { font-size: 8px; font-weight: 600; }
.g-styles .body { justify-content: space-between; padding: 0 8px 0 4px; }
.g-edit .body { gap: 6px; padding-left: 6px; }
.g-edit .stack .ib { gap: 5px; }
.far { margin-left: 5px; }
.collapse { position: absolute; right: 0; bottom: 3px; }

.qat { flex: none; height: 34px; display: grid; grid-template-columns: 28px 37px 37px 34px 30px 28px 36px 42px 84px 34px 28px 34px 28px 34px; align-items: center; border-top: 1px solid #dcdcdc; }
.qat select { margin: 0 4px; height: 21px; }
.filt { background: #43915f; width: 25px; height: 27px; justify-self: center; }
.fx { font: italic 17px "Liberation Serif", serif; }

.docs { flex: none; height: 25px; display: flex; align-items: flex-end; padding: 2px 1px 0; background: linear-gradient(#c2c6d0, #eef0f4); border-bottom: 3px double #8d93a0; }
.doc { width: 266px; height: 20px; background: linear-gradient(#fff, #f4f5f7); border: 1px solid #8d93a0; border-bottom: 0; display: flex; align-items: center; gap: 7px; padding: 0 4px; font-weight: 700; white-space: nowrap; border-radius: 2px 2px 0 0; }
.doc span { flex: 1; }
.newdoc { width: 28px; height: 20px; display: grid; place-items: center; background: linear-gradient(#e4e7ec, #cfd3dc); border: 1px solid #9a9fab; border-bottom: 0; }

.sheet { flex: 1; min-height: 0; display: flex; }
.view { flex: 1; overflow: hidden; background: #d0cece; }
.vscroll { width: 6px; border-left: 1px solid #bbb; display: flex; flex-direction: column; background: #e0e0e0; }
.vscroll i { height: 14px; background: #fff; border: 1px solid #bbb; }
.vscroll .end { margin-top: auto; }
table { table-layout: fixed; width: 1194px; border-collapse: separate; border-spacing: 0; }
.w20 { width: 20px; } .w56 { width: 56px; } .w83 { width: 83px; } .w45 { width: 45px; } .w91 { width: 91px; } .w141 { width: 141px; } .w139 { width: 139px; } .w31 { width: 31px; } .w32 { width: 32px; } .w39 { width: 39px; } .w29 { width: 29px; } .w30 { width: 30px; } .w33 { width: 33px; } .w34 { width: 34px; } .w40 { width: 40px; } .w42 { width: 42px; } .w15 { width: 15px; }
td, th { padding: 0; overflow: hidden; white-space: nowrap; text-align: center; }
th { background: #e6e6e6; font-weight: 400; font-size: 10px; line-height: 12px; color: #333; border-right: 1px solid #b5b5b5; border-bottom: 1px solid #c6c6c6; vertical-align: bottom; }
.cols { height: 14px; } .cols th { vertical-align: middle; }
.cols .corner { background: linear-gradient(135deg, #e6e6e6 60%, #b8b8b8 60%); }
.cols .cur { background: #cfcfcf; color: #247548; border-bottom: 2px solid #247548; }
tbody .cur { background: #cfcfcf; color: #247548; border-right: 2px solid #247548; }
.cols .cut { text-align: right; border-right: 0; }
.h36 { height: 36px; } .h26 { height: 26px; } .h23 { height: 23px; } .h18 { height: 18px; } .h16 { height: 16px; } .h15 { height: 15px; } .h14 { height: 14px; }
.form td { color: #000; font-weight: 700; }
.colc { border-right: 2px solid #000; border-bottom: 1px solid #000; }
.pink { background: #ff99ff; border-bottom: 1px solid #000; white-space: normal; }
.small { font-size: 8px; line-height: 11px; }
.saat { border-left: 1px solid #000; }
.yellow { background: #ff0; border: 1px solid #000; }
.n24 { font-size: 17px; border-top: 0; border-left-width: 2px; }
.form .n175 { color: red; font-size: 17px; border-width: 1px 2px 2px 0; }
.frame { background: #a6a6a6; border: 3px double #000; }
.form .wait { color: #ff0; font: 700 11px/14px "Liberation Serif", serif; white-space: normal; }
.ft { border-bottom: 0; } .fm { border-top: 0; border-bottom: 0; } .fb { border-top: 0; }
.form .zaman { color: red; font: 700 20px/20px "Liberation Serif", serif; }
.form .run { background: #92d050; font: 400 15px/20px "Liberation Serif", serif; }
.pair { display: flex; gap: 3px; padding: 5px 7px 0 5px; justify-content: center; }
.pair button, .act button { background: #f0f0f0; border: 1px solid #fff; border-right: 2px solid #888; border-bottom: 2px solid #888; height: 24px; font-size: 9px; font-weight: 600; color: #222; }
.pair button { flex: 1; }
.form .cap, .form .name { font: 700 10px/12px "Open Sans", sans-serif; }
.form .name { text-align: left; padding-left: 3px; }
.box { border: 1px solid #000; border-width: 0 2px 2px; line-height: 12px; }
.first { border-top-width: 2px; }
.mint { background: #c6e0b4; font-size: 16px; }
.form .sand { background: #ffe699; font-weight: 400; font-size: 8px; }
.amber { background: #ffc000; font-size: 12px; }
.act { vertical-align: bottom; border: 2px solid #000; border-top: 0; padding: 0 6px 3px; }
.act button { width: 100%; height: 34px; }
.blue { background: #b4c6e7; border-right-width: 1px; } .peach { background: #f8cbad; border-left-width: 1px; }
.peach button { border-color: #888 #fff #fff #888; border-width: 1px 1px 1px 2px; }
.sel { border: 2px solid #217346; }
.heads { height: 28px; }
.heads td { position: relative; background: #00b050; border-top: 1px solid #000; border-right: 1px solid #222; border-bottom: 1px solid #222; font-size: 9px; line-height: 12px; vertical-align: top; padding-top: 1px; }
.heads .mid { vertical-align: middle; font-size: 10px; }
.heads .tight { font-size: 8px; }
.heads .yel { background: linear-gradient(225deg, red 4px, #ff0 4px); }
.heads .open { text-align: left; padding-left: 9px; }
.heads button { position: absolute; right: 1px; bottom: 1px; width: 14px; height: 14px; background: #f6f6f6; border: 1px solid #bbb; color: #555; font: 10px/11px "DejaVu Sans", sans-serif; }
.data tr { height: 14px; }
.data tr:nth-child(5n) { height: 15px; }
.data td { font: 9px/12px "Liberation Sans", sans-serif; color: #111; background: #d9e1f2; border-right: 1px solid #111; border-bottom: 1px solid #111; }
.data .gia { background: #aeaaaa; border-bottom-color: #aeaaaa; text-align: left; padding-left: 1px; }
.data .when { background: #e34d4d; font-weight: 700; font-size: 10px; }
.data .hot { background: #92d050; }
.data .pc { background: #5b9bd5; }
.data .wh { background: #fff; }
.data .diff { position: relative; background: #c6efce; color: #12783c; }
.data .diff::before { content: ""; position: absolute; left: 17px; top: 0; bottom: 0; border-left: 1px dashed #087a3a; width: 2px; background: #35b868; }
.data .zero { background: #ffc7ce; color: #9c0006; }
.data .zero::before { background: none; }
.data .od { background: #ddebf7; font: 9px/12px "Open Sans", sans-serif; }
.data .od.last { text-align: left; padding-left: 6px; background: linear-gradient(135deg, #0a8a2a 4px, #ddebf7 4px); border-right: 0; }

.bottom { flex: none; height: 19px; display: flex; align-items: stretch; background: #e6e6e6; border-top: 1px solid #c6c6c6; font-size: 11px; line-height: 18px; }
.nav { width: 25px; font-size: 7px; color: #b5b5b5; }
.nav:first-child { margin-left: 13px; }
.st { padding: 0 8px; font-weight: 600; margin-right: 4px; }
.index { margin-left: 27px; color: #217346; background: linear-gradient(#fff, #b9dfc6); font-weight: 700; padding: 0 9px; }
.ric { background: #ffc000; color: #3a2c00; } .pro { background: #0070c0; color: #fff; }
.plus { margin-left: 28px; display: grid; place-items: center; }
.hs { margin-left: auto; width: 40%; margin-right: 6px; display: flex; }
.dots { width: 28px; color: #999; padding-left: 4px; }
.hs button { width: 13px; height: 14px; margin-top: 4px; background: #fff; border: 1px solid #aaa; font-size: 7px; line-height: 10px; color: #555; }
.track { flex: 1; background: #dcdcdc; margin-top: 4px; height: 14px; display: flex; justify-content: flex-end; }
.track i { width: 39%; background: #fff; border: 1px solid #aaa; }

.bandicam { position: absolute; left: 225px; top: 0; width: 275px; height: 53px; background: #414b5a; border: 1px solid #20252c; border-top: 0; color: #c5cad2; display: flex; flex-direction: column; }
.bt { height: 14px; display: flex; justify-content: space-between; padding: 0 2px 0 4px; font: 700 7px/13px "Open Sans", sans-serif; color: #fff; }
.bt em { font-style: normal; color: #e04040; }
.bm { height: 24px; background: #262c36; display: flex; align-items: center; }
.bm button, .cam { height: 24px; display: grid; place-items: center; }
.bm .m1 { width: 32px; background: #3d9bf0; } .bm .m2 { width: 7px; background: #3d9bf0; border-left: 1px solid #256cae; }
.m2 .caret { border-width: 2px; border-top-color: #fff; }
.bm .m3 { width: 31px; background: #3f648c; margin-left: 1px; }
.bm .cam { width: 27px; height: 20px; background: #15181d; margin-left: 3px; }
.icons { margin-left: 7px; }
.bm .rec { width: 24px; height: 24px; border-radius: 50%; background: #e64545; color: #fff; font-size: 8px; font-weight: 700; margin-left: 1px; }
.shot { margin-left: 6px; }
.bs { font: 6px/14px "Liberation Sans", sans-serif; display: flex; align-items: center; gap: 6px; padding-left: 4px; }
.tip { position: absolute; left: 492px; top: 41px; height: 22px; border: 1px solid #222; background: #fff; padding: 0 4px; line-height: 21px; color: #444; white-space: nowrap; }
.pointer { position: absolute; left: 491px; top: 22px; }

.dialog { position: absolute; left: 443px; top: 145px; width: 326px; height: 184px; background: #f0f0f0; border: 1px solid #9a9a9a; box-shadow: 2px 2px 6px rgba(0,0,0,.45); display: flex; flex-direction: column; color: #000; font: 10px/14px Roboto, sans-serif; }
.dialog h2 { margin: 0; background: #fff; font: 400 10px/27px "Open Sans", sans-serif; color: #999; padding-left: 7px; }
.msg { flex: 1; padding: 12px 10px; }
.msg p { margin: 0 0 9px; }
.acts { display: flex; gap: 12px; padding: 0 12px 8px 9px; }
.acts button { flex: 1; height: 22px; background: #f0f0f0; border: 1px solid #fff; border-right: 2px solid #777; border-bottom: 2px solid #777; }
.acts button:disabled { color: #aaa; }
```
FILE: app.js
```js
const D = "29/11/2021 ";
const rows = [
  ["INT FRLW", "03:00", "Brazil (w)", "Venezuela (w)", "1.02 15.86* 23.13* 1.02 15.24 28.94", "90.22 5.80 3.98", "0.00 -0.62 5.81", 8.67, 8.06, -0.61, "0.95 9.40 0."],
  ["MEX D1", "03:00", "Tigres UANL", "Santos Laguna", "1.86 3.34* 3.97* 1.93 3.29 3.85", "49.37 27.50 23.13", "0.07 -0.05 -0.12", 8.89, 8.18, -0.71, "1.19 1.81 1."],
  ["ECU D1", "03:00", "Macara", "Barcelona SC(ECU)", "4.53* 3.67* 1.64 4.17 3.53 1.74", "20.01 24.70 55.28", "-0.36 -0.14 0.10", 10.30, 9.78, -0.52, "2.02 1.13 1."],
  ["ECU D1", "03:00", "Universidad Catolica", "9 de Octubre", "1.81 3.53* 3.76* 1.94 3.50 3.37", "50.15 25.71 24.14", "0.13 -0.03 -0.39", 10.17, 9.79, -0.38, "1.19 1.82 1."],
  ["NIC D1", "03:00", "Walter Ferretti", "Real Esteli", "3.93* 3.32* 1.81 3.91 3.29 1.83", "22.96 27.18 49.86", "-0.02 -0.03 0.02", 10.81, 10.62, -0.20, "1.79 1.17 1."],
  ["Belize PL", "03:00", "Altitude FC", "Wagiya FC", "1.36 4.68* 6.00* 1.36 4.72 6.08", "65.91 19.15 14.94", "0.00 0.04 0.08", 11.56, 11.16, -0.40, "1.05 2.62 1."],
  ["ARU DDH", "03:00", "Bubali SC", "SV Caravel", "3.84* 4.32* 1.62 4.30 4.56 1.54", "23.48 20.87 55.65", "0.46 0.24 -0.08", 10.92, 10.12, -0.80, "2.03 1.17 1."],
  ["SLV LFW", "03:00", "Alianza FC San Salvador (w)", "Santa Tecla (w)", "1.04 13.25* 17.00* 1.04 13.25 17.00", "87.74 6.89 5.37", "0.00 0.00 0.00", 9.58, 9.58, 0, "0.96 7.44 0."],
  ["ARG D1", "03:30", "Boca Juniors", "Newells Old Boys", "1.46 3.95* 6.96* 1.36 4.44 8.44", "63.32 23.40 13.28", "-0.10 0.49 1.48", 8.18, 7.90, -0.28, "1.06 2.51 1."],
  ["COL D1", "04:05", "Alianza Petrolera", "Deportes Tolima", "2.68* 2.88* 2.61* 3.04 2.88 2.39", "33.81 31.47 34.72", "0.36 0.00 -0.22", 10.35, 9.46, -0.89, "1.38 1.36 1."],
  ["USL CH", "04:30", "Tampa Bay Rowdies", "Orange County Blues FC", "1.49 3.97* 5.47* 1.49 4.04 5.55", "60.69 22.78 16.53", "0.00 0.07 0.08", 10.58, 9.88, -0.70, "1.08 2.30 1."],
  ["MEX D1", "05:05", "Club Leon", "Puebla", "1.59 3.75* 5.20* 1.76 3.50 4.44", "57.81 24.51 17.68", "0.17 -0.25 -0.76", 8.79, 7.91, -0.88, "1.11 2.17 1."]
];
const mix = (a, b, t) => `rgb(${a.map((c, i) => Math.round(c + (b[i] - c) * Math.min(1, t)))})`;
const heat = v => v >= 0 ? mix([255, 235, 132], [248, 105, 107], v / 0.85) : mix([255, 235, 132], [99, 190, 123], -v / 0.8);
const tint = v => v >= 9.8 ? mix([255, 255, 255], [248, 160, 165], (v - 9.8) / 2.4) : mix([255, 255, 255], [150, 210, 170], (9.8 - v) / 3.5);
const td = (text, cls = "", bg = "") => `<td class="${cls}"${bg ? ` style="background:${bg}"` : ""}>${text}</td>`;

document.getElementById("data").innerHTML = rows.map((r, n) => {
  const odds = r[4].split(" ").map(v => td(v.replace("*", ""), v.endsWith("*") ? "hot" : ""));
  const pcs = r[5].split(" ").map(v => td(v, "pc"));
  const diffs = r[6].split(" ").map(v => td(v, "", heat(+v)));
  const open = r[10].split(" ").map((v, i) => td(v, i === 2 ? "od last" : "od"));
  return `<tr><th>${12 + n}</th>` + td("GIA' INIZIATA", "gia") + td(D + "03:20") + td(r[0]) + td(D + r[1], "when") +
    td(r[2]) + td(r[3]) + odds.join("") + td("#ЗНАЧ!") + pcs.join("") + diffs.join("") +
    td(r[7].toFixed(2) + "%", "", tint(r[7])) + td(r[8].toFixed(2) + "%", "wh") +
    td(r[9].toFixed(2) + "%", r[9] ? "diff" : "diff zero") + open.join("") + "</tr>";
}).join("");
```
